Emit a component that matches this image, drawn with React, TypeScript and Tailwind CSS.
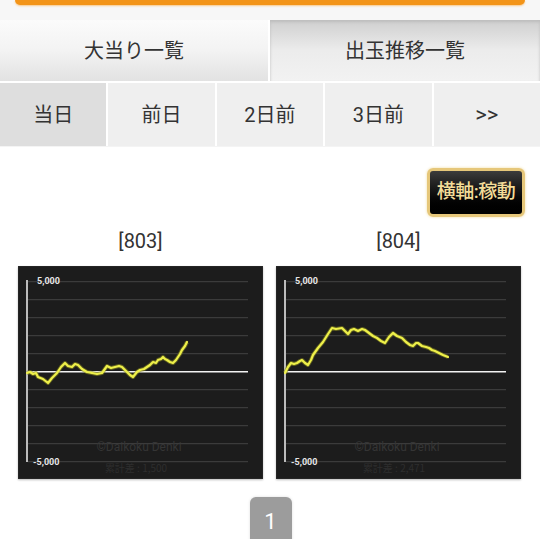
const days = ["当日", "前日", "2日前", "3日前", ">>"];

const grid = [15.7, 33.7, 51.7, 69.7, 87.7, 105.7, 123.7, 141.7, 159.7, 177.7, 195.7];

const charts = [
  {
    no: "[803]",
    total: "累計差 : 1,500",
    pts: [
      [9, 107], [12, 106], [15, 108], [18, 107], [20, 111], [25, 113], [30, 117], [34, 112], [39, 107],
      [43, 101], [47, 97], [50, 100], [54, 101], [57, 98], [60, 99], [64, 103], [69, 106], [74, 107],
      [79, 108], [84, 107], [89, 100], [93, 102], [97, 101], [101, 100], [104, 101], [107, 104],
      [109, 106], [112, 109], [115, 111], [119, 106], [122, 104], [126, 103], [129, 101], [132, 99],
      [135, 96], [138, 97], [140, 94], [143, 93], [145, 91], [147, 93], [149, 94], [152, 96],
      [155, 97], [158, 94], [160, 91], [162, 88], [164, 84], [167, 80], [169, 76],
    ],
  },
  {
    no: "[804]",
    total: "累計差 : 2,471",
    pts: [
      [9, 107], [12, 101], [15, 97], [18, 98], [21, 97], [24, 95], [26, 94], [29, 97], [32, 99],
      [35, 94], [37, 89], [42, 82], [47, 76], [52, 68], [56, 62], [60, 63], [66, 62], [69, 65],
      [72, 68], [75, 64], [78, 63], [82, 65], [86, 63], [89, 64], [93, 67], [97, 70], [101, 72],
      [105, 75], [109, 77], [113, 71], [117, 67], [121, 70], [126, 72], [130, 76], [134, 79],
      [137, 80], [140, 77], [142, 77], [146, 80], [150, 81], [153, 82], [156, 84], [159, 85],
      [163, 87], [167, 89], [172, 91],
    ],
  },
];

function Chart({ pts, total }: { pts: number[][]; total: string }) {
  const d = pts.map((p) => p.join(",")).join(" ");
  return (
    <svg width="245" height="213" viewBox="0 0 245 213" className="block">
      <rect x="0" y="0" width="245" height="213" fill="#1c1c1c" stroke="#2e2e2e" />
      {grid.map((y, i) =>
        i === 5 ? null : (
          <line key={y} x1="10" x2="230" y1={y} y2={y} stroke="#3b3b3b" strokeWidth="1.2" />
        )
      )}
      <text x="121" y="185" textAnchor="middle" fontSize="12" fill="#353535" fontFamily="Roboto, sans-serif">
        ©Daikoku Denki
      </text>
      <text x="118" y="206" textAnchor="middle" fontSize="10" fill="#2e2e2e" fontFamily="'Noto Sans CJK JP', sans-serif">
        {total}
      </text>
      <line x1="9" x2="9" y1="14" y2="196" stroke="#f2f2f2" strokeWidth="1.5" />
      <line x1="9" x2="230" y1="105.7" y2="105.7" stroke="#f2f2f2" strokeWidth="1.5" />
      <text x="19" y="18" fontSize="9" fill="#e6e6e6" fontFamily="Roboto, sans-serif" fontWeight="bold">
        5,000
      </text>
      <text x="15" y="199" fontSize="9" fill="#e6e6e6" fontFamily="Roboto, sans-serif" fontWeight="bold">
        -5,000
      </text>
      <polyline points={d} fill="none" stroke="#8a8a20" strokeWidth="4" strokeLinejoin="round" opacity="0.6" />
      <polyline points={d} fill="none" stroke="#eef04a" strokeWidth="2.2" strokeLinejoin="round" strokeLinecap="round" />
    </svg>
  );
}

export default function App() {
  return (
    <div className="w-[540px] h-[539px] overflow-hidden bg-white text-[#333333] font-['Roboto','Noto_Sans_CJK_JP',sans-serif]">
      {/* 上部バー */}
      <div className="h-[20px] bg-[#f7f7f7] px-[15px]">
        <div className="h-[5px] rounded-b-[6px] bg-[#f39418] shadow-[0_1px_2px_#f8c88a]" />
      </div>

      {/* タブ */}
      <div className="flex h-[61px] bg-[#f7f7f7]">
        <div className="flex w-[268px] items-center justify-center bg-gradient-to-b from-[#fbfbfb] via-[#f3f3f3] to-[#e2e2e2] text-[20px]">
          大当り一覧
        </div>
        <div className="w-[2px] bg-white" />
        <div className="flex flex-1 items-center justify-center bg-gradient-to-b from-[#cfcfcf] via-[#ececec] to-[#f2f2f2] text-[20px] shadow-[inset_0_2px_3px_#bdbdbd]">
          出玉推移一覧
        </div>
      </div>

      {/* 日付 */}
      <div className="grid h-[66px] grid-cols-5 gap-[2px] border-b border-[#f4f4f4] bg-white pt-[2px]">
        {days.map((d, i) => (
          <div
            key={d}
            className={`flex items-center justify-center ${i === 4 ? "text-[22px]" : "text-[20px]"} ${i === 0 ? "bg-[#dedede]" : "bg-[#efefef]"}`}
          >
            {d}
          </div>
        ))}
      </div>

      {/* 横軸ボタン */}
      <div className="flex justify-end pr-[15px] pt-[21px]">
        <div className="flex h-[49px] w-[98px] items-center justify-center rounded-[6px] border-[3px] border-[#e6c77a] bg-gradient-to-b from-[#3c3c3c] via-[#111111] to-[#000000] text-[19px] font-medium tracking-[-0.5px] text-[#f3dc98] shadow-[0_0_3px_#f0dca0]">
          横軸:稼動
        </div>
      </div>

      {/* グラフ */}
      <div className="flex gap-[13px] pl-[18px] pt-[12px]">
        {charts.map((c) => (
          <div key={c.no} className="flex w-[245px] flex-col items-center">
            <div className="h-[24px] text-[20px] leading-[24px] text-[#333333]">{c.no}</div>
            <div className="mt-[13px] shadow-[0_1px_2px_#bbbbbb]">
              <Chart pts={c.pts} total={c.total} />
            </div>
          </div>
        ))}
      </div>

      {/* ページ */}
      <div className="flex justify-center pt-[18px] pl-[1px]">
        <div className="flex h-[44px] w-[42px] items-start justify-center rounded-t-[6px] bg-[#9c9c9c] pt-[8px] text-[22px] text-white shadow-[0_0_3px_#dddddd]">
          1
        </div>
      </div>
    </div>
  );
}
